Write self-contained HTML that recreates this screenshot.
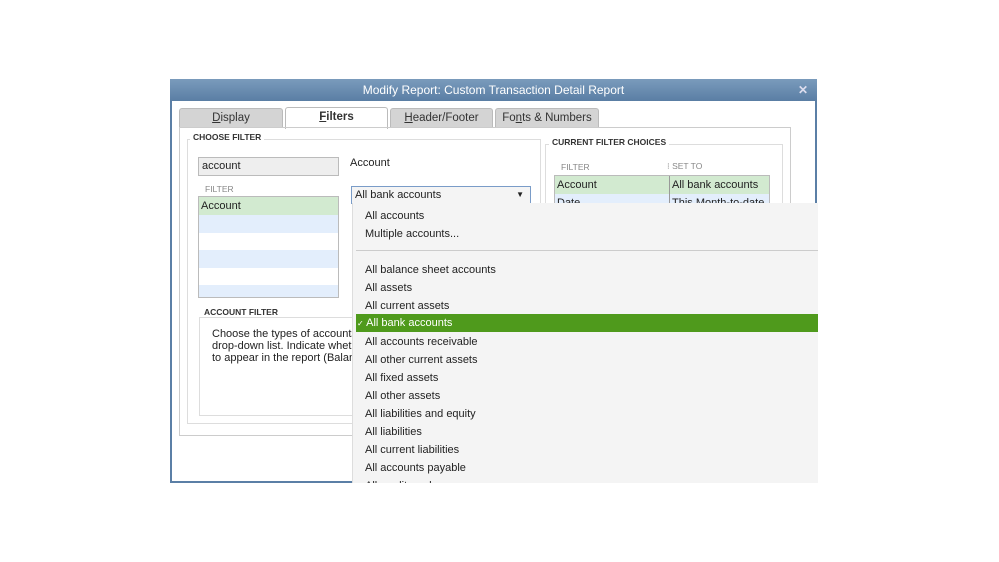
<!DOCTYPE html><html><head><style>
body{margin:0;width:999px;height:562px;background:#fff;position:relative;overflow:hidden;font-family:"Liberation Sans",Arial,sans-serif;font-size:11px;color:#222}
.a{position:absolute}
.tab{position:absolute;top:108px;height:19px;background:#d4d4d4;border:1px solid #bbb;border-bottom:none;border-radius:3px 3px 0 0;text-align:center;line-height:18px;font-size:11.5px;color:#333}
.lbl{font-size:8.5px;font-weight:bold;color:#333;background:#fff;padding:0 3px}
.it{position:absolute;left:12px;font-size:11px;color:#222}
</style></head><body>
<div class="a" style="left:170px;top:79px;width:647px;height:404px;background:#fff;border-left:2px solid #5b7fa6;border-right:2px solid #5b7fa6;border-bottom:2px solid #5b7fa6;box-sizing:border-box"></div>
<div class="a" style="left:170px;top:79px;width:647px;height:22px;background:linear-gradient(#7a9bbc,#5a7ea4);color:#fff;font-size:12px;text-align:center;line-height:22px">Modify Report: Custom Transaction Detail Report<span style="position:absolute;right:9px;font-weight:bold;color:#dde">✕</span></div>
<div class="tab" style="left:179px;width:102px"><u>D</u>isplay</div>
<div class="tab" style="left:285px;width:101px;background:#fff;top:107px;height:21px;font-weight:bold"><u>F</u>ilters</div>
<div class="tab" style="left:390px;width:101px"><u>H</u>eader/Footer</div>
<div class="tab" style="left:495px;width:102px">Fo<u>n</u>ts &amp; Numbers</div>
<div class="a" style="left:179px;top:127px;width:610px;height:307px;border:1px solid #ccc"></div>
<div class="a" style="left:187px;top:139px;width:352px;height:283px;border:1px solid #ddd"></div>
<div class="a lbl" style="left:190px;top:132px">CHOOSE FILTER</div>
<div class="a" style="left:545px;top:144px;width:236px;height:70px;border:1px solid #ddd"></div>
<div class="a lbl" style="left:549px;top:137px">CURRENT FILTER CHOICES</div>
<div class="a" style="left:198px;top:157px;width:141px;height:19px;background:#eee;border:1px solid #bbb;box-sizing:border-box;font-size:11px;line-height:17px;padding-left:3px">account</div>
<div class="a" style="left:205px;top:184px;font-size:8.5px;color:#888">FILTER</div>
<div class="a" style="left:198px;top:196px;width:141px;height:102px;border:1px solid #bbb;box-sizing:border-box;background:#fff">
<div style="height:18px;background:#d2ead0;line-height:19px;padding-left:2px">Account</div>
<div style="height:18px;background:#e3eefc"></div><div style="height:17px"></div><div style="height:18px;background:#e3eefc"></div><div style="height:17px"></div><div style="height:12px;background:#e3eefc"></div></div>
<div class="a" style="left:350px;top:157px;font-size:11px">Account</div>
<div class="a" style="left:351px;top:186px;width:180px;height:18px;border:1px solid #7a9cc8;box-sizing:border-box;background:#f4f4f4;line-height:16px;padding-left:3px">All bank accounts<span style="position:absolute;right:6px;top:0;font-size:8px">▼</span></div>
<div class="a" style="left:199px;top:317px;width:154px;height:97px;border:1px solid #ddd"></div>
<div class="a lbl" style="left:201px;top:307px">ACCOUNT FILTER</div>
<div class="a" style="left:212px;top:328px;font-size:11px;line-height:12px;width:141px;overflow:hidden;white-space:nowrap">Choose the types of accounts<br>drop-down list. Indicate whether<br>to appear in the report (Balance</div>
<div class="a" style="left:561px;top:162px;font-size:8.5px;color:#888">FILTER</div>
<div class="a" style="left:667px;top:161px;font-size:8.5px;color:#888">⁝ SET TO</div>
<div class="a" style="left:554px;top:175px;width:216px;height:29px;border:1px solid #bbb;box-sizing:border-box;overflow:hidden">
<div style="height:18px;background:#d2ead0;line-height:18px;display:flex"><span style="width:112px;padding-left:2px;border-right:1px solid #999">Account</span><span style="padding-left:2px">All bank accounts</span></div>
<div style="height:18px;background:#e3eefc;line-height:18px;display:flex"><span style="width:112px;padding-left:2px;border-right:1px solid #999">Date</span><span style="padding-left:2px">This Month-to-date</span></div></div>
<div class="a" style="left:352px;top:203px;width:465px;height:280px;background:#f4f4f4;border-left:1px solid #ddd;overflow:hidden">
<div class="it" style="top:7px">All accounts</div>
<div class="it" style="top:25px">Multiple accounts...</div>
<div class="a" style="left:3px;top:47px;width:462px;height:1px;background:#ccc"></div>
<div class="it" style="top:61px">All balance sheet accounts</div>
<div class="it" style="top:79px">All assets</div>
<div class="it" style="top:97px">All current assets</div>
<div class="a" style="left:3px;top:111px;width:462px;height:18px;background:#4f9a1c"></div>
<div class="it" style="top:114px;color:#fff;left:4px"><span style="font-size:8px">✓</span> All bank accounts</div>
<div class="it" style="top:133px">All accounts receivable</div>
<div class="it" style="top:151px">All other current assets</div>
<div class="it" style="top:169px">All fixed assets</div>
<div class="it" style="top:187px">All other assets</div>
<div class="it" style="top:205px">All liabilities and equity</div>
<div class="it" style="top:223px">All liabilities</div>
<div class="it" style="top:241px">All current liabilities</div>
<div class="it" style="top:259px">All accounts payable</div>
<div class="it" style="top:277px">All credit cards</div>
</div>
</body></html>
